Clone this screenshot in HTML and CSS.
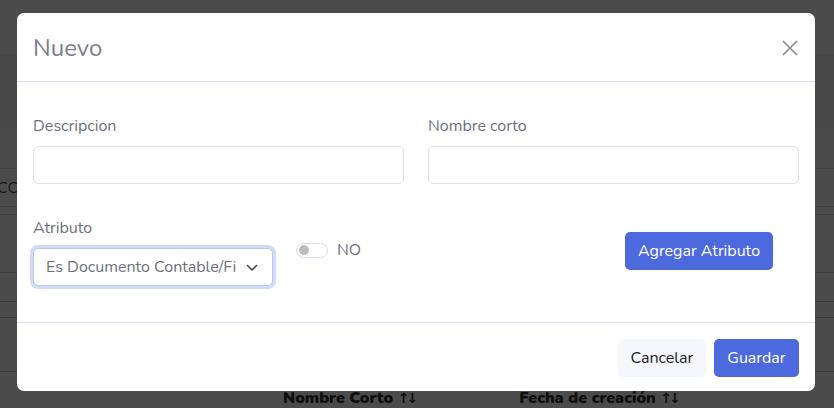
FILE: index.html
```html
<!DOCTYPE html>
<html lang="es">
<head>
<meta charset="utf-8">
<title>Nuevo</title>
<link rel="stylesheet" href="styles.css">
</head>
<body>
<div class="page">
  <div class="bg-top"></div>
  <div class="bg-band"></div>
  <div class="bg-row r1"></div>
  <div class="bg-row r2"><span class="cut">CC</span></div>
  <div class="bg-row r3"></div>
  <div class="bg-row r4"></div>
  <div class="bg-row r5"></div>
  <div class="bg-row r6"></div>
  <div class="bg-row r7"></div>
  <div class="thead">
    <span class="th th1">Nombre Corto <span class="arr">↑↓</span></span>
    <span class="th th2">Fecha de creación <span class="arr">↑↓</span></span>
  </div>
</div>

<div class="modal">
  <div class="modal-header">
    <h5 class="modal-title">Nuevo</h5>
    <button class="close" aria-label="Cerrar">
      <svg width="16" height="16" viewBox="0 0 16 16"><path d="M1 1L15 15M15 1L1 15" stroke="#8a8a8e" stroke-width="1.6" fill="none"/></svg>
    </button>
  </div>
  <div class="modal-body">
    <div class="row-two">
      <div class="field">
        <label class="label">Descripcion</label>
        <input class="input" type="text">
      </div>
      <div class="field">
        <label class="label">Nombre corto</label>
        <input class="input" type="text">
      </div>
    </div>
    <div class="row-attr">
      <div class="field">
        <label class="label">Atributo</label>
        <div class="select-wrap">
          <select class="select"><option>Es Documento Contable/Financiero</option></select>
          <svg class="chev" width="12" height="8" viewBox="0 0 12 8"><path d="M1.5 1.5L6 6L10.5 1.5" stroke="#444" stroke-width="1.6" fill="none" stroke-linecap="round" stroke-linejoin="round"/></svg>
        </div>
      </div>
      <div class="switch-col">
        <span class="switch"><span class="knob"></span></span>
        <span class="switch-label">NO</span>
      </div>
      <div class="btn-col">
        <button class="btn btn-primary">Agregar Atributo</button>
      </div>
    </div>
  </div>
  <div class="modal-footer">
    <button class="btn btn-light">Cancelar</button>
    <button class="btn btn-primary btn-save">Guardar</button>
  </div>
</div>
</body>
</html>
```

FILE: styles.css
```css
* { box-sizing: border-box; }
html, body { margin: 0; padding: 0; }
body {
  width: 834px;
  height: 408px;
  overflow: hidden;
  background: #4b4b4b;
  font-family: "Nunito", Lato, "Noto Sans", sans-serif;
  color: #6e707e;
}
.page { display: flex; flex-direction: column; }
.bg-top { height: 54px; background: #4b4b4b; }
.bg-band { height: 74px; background: #474747; }
.bg-row { border-bottom: 1px solid #3d3d3d; }
.r1 { height: 41px; border-bottom-color: #444; }
.r2 { height: 38px; border-bottom-color: #424242; }
.r3 { height: 8px; }
.r4 { height: 58px; }
.r5 { height: 29px; }
.r6 { height: 16px; }
.r7 { height: 54px; }
.cut {
  display: block;
  font-size: 16px;
  color: #1a1a1a;
  margin-left: -3px;
  padding-top: 8px;
}
.thead { display: flex; height: 36px; padding-top: 15px; }
.th { font-weight: 900; font-size: 16px; color: #0e0e0e; white-space: nowrap; }
.arr { font-family: "DejaVu Sans", sans-serif; font-weight: 700; font-size: 14px; letter-spacing: -3px; }
.th1 { margin-left: 283px; }
.th2 { margin-left: 104px; }

.modal {
  position: absolute;
  left: 17px;
  top: 13px;
  width: 798px;
  height: 378px;
  background: #fff;
  border-radius: 7px;
  display: flex;
  flex-direction: column;
}
.modal-header {
  height: 69px;
  border-bottom: 1px solid #e3e1ef;
  display: flex;
  align-items: center;
  justify-content: space-between;
  padding: 0 16px;
}
.modal-title {
  margin: 0;
  font-size: 24px;
  font-weight: 400;
  color: #7b7d8d;
  line-height: 36px;
  padding-top: 1px;
}
.close {
  border: 0;
  background: none;
  padding: 0;
  margin-right: 1px;
  margin-top: 1px;
  width: 16px;
  height: 16px;
  display: flex;
}
.modal-body {
  height: 241px;
  padding: 32px 16px 0;
  border-bottom: 1px solid #e3e1ef;
}
.row-two {
  display: grid;
  grid-template-columns: 371px 371px;
  column-gap: 24px;
}
.field { display: flex; flex-direction: column; }
.label {
  font-size: 16px;
  line-height: 24px;
  margin-bottom: 8px;
  color: #6e707e;
}
.input {
  height: 38px;
  border: 1px solid #dfe0ec;
  border-radius: 5px;
  font: inherit;
}
.row-attr {
  margin-top: 32px;
  display: grid;
  grid-template-columns: 240px 352px auto;
}
.row-attr .field { width: 240px; }
.select-wrap { position: relative; }
.select {
  appearance: none;
  -webkit-appearance: none;
  width: 240px;
  height: 38px;
  border: 1px solid #b7c5f1;
  border-radius: 5px;
  box-shadow: 0 0 0 3px #d3dcf7;
  background: #fff;
  font-family: inherit;
  font-size: 16px;
  color: #6e707e;
  padding: 0 36px 0 12px;
  outline: none;
}
.chev { position: absolute; left: 213px; top: 16px; }
.switch-col {
  display: flex;
  align-items: center;
  gap: 9px;
  padding-top: 24px;
  padding-left: 23px;
  align-self: start;
}
.switch {
  width: 32px;
  height: 15px;
  border: 1px solid #dcdbe8;
  border-radius: 8px;
  display: flex;
  align-items: center;
  padding-left: 2px;
}
.knob {
  width: 10px;
  height: 10px;
  border-radius: 50%;
  background: #bdbdbd;
}
.switch-label { font-size: 16px; color: #6e707e; line-height: 20px; }
.btn-col { padding-top: 16px; }
.btn {
  font-family: inherit;
  font-size: 16px;
  height: 38px;
  border-radius: 5px;
  border: 0;
  padding: 0 13px;
}
.btn-primary { background: #4c6ade; color: #fff; }
.btn-save { padding: 0 13.5px; }
.btn-light { background: #f6f7fc; color: #1c1c1c; padding: 0 12.5px; }
.modal-footer {
  display: flex;
  justify-content: flex-end;
  gap: 8px;
  padding: 16px 16px 0;
}
```
